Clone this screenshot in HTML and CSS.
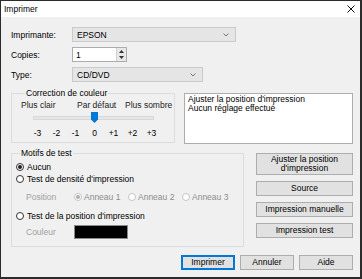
FILE: index.html
```html
<!DOCTYPE html>
<html lang="fr">
<head>
    <meta charset="UTF-8">
    <title>Imprimer</title>
    <link rel="stylesheet" href="styles.css">
</head>
<body>

    <div class="window">

        <!-- Title bar -->
        <div class="titlebar">
            <span class="title">Imprimer</span>
            <svg class="close" width="8" height="8" viewBox="0 0 8 8">
                <path d="M0.5 0.5 L7.5 7.5 M7.5 0.5 L0.5 7.5" stroke="#111" stroke-width="1"/>
            </svg>
        </div>

        <div class="content">

            <!-- Printer / copies / type -->
            <div class="field-row">
                <span class="field-label">Imprimante:</span>
                <div class="combo combo-printer">
                    <span>EPSON</span>
                    <svg width="6" height="4" viewBox="0 0 6 4"><path d="M0.5 0.5 L3 3 L5.5 0.5" fill="none" stroke="#777" stroke-width="1"/></svg>
                </div>
            </div>
            <div class="field-row">
                <span class="field-label">Copies:</span>
                <div class="spin">
                    <span class="spin-value">1</span>
                    <div class="spin-btns">
                        <div class="spin-btn"><svg width="5" height="3" viewBox="0 0 5 3"><path d="M0 3 L2.5 0 L5 3 Z" fill="#333"/></svg></div>
                        <div class="spin-btn"><svg width="5" height="3" viewBox="0 0 5 3"><path d="M0 0 L5 0 L2.5 3 Z" fill="#333"/></svg></div>
                    </div>
                </div>
            </div>
            <div class="field-row">
                <span class="field-label">Type:</span>
                <div class="combo combo-type">
                    <span>CD/DVD</span>
                    <svg width="6" height="4" viewBox="0 0 6 4"><path d="M0.5 0.5 L3 3 L5.5 0.5" fill="none" stroke="#777" stroke-width="1"/></svg>
                </div>
            </div>

            <!-- Colour correction + info -->
            <div class="section section-color">
                <fieldset class="group color-group">
                    <legend>Correction de couleur</legend>
                    <div class="scale-labels">
                        <span>Plus clair</span>
                        <span>Par défaut</span>
                        <span>Plus sombre</span>
                    </div>
                    <div class="slider">
                        <div class="track"></div>
                        <svg class="thumb" width="7" height="11" viewBox="0 0 7 11">
                            <path d="M0 0 H7 V7.5 L3.5 11 L0 7.5 Z" fill="#0078d7"/>
                        </svg>
                    </div>
                    <div class="ticks">
                        <span>-3</span><span>-2</span><span>-1</span><span>0</span><span>+1</span><span>+2</span><span>+3</span>
                    </div>
                </fieldset>
                <div class="info-box">
                    Ajuster la position d'impression<br>
                    Aucun réglage effectué
                </div>
            </div>

            <!-- Test patterns + side buttons -->
            <div class="section section-test">
                <fieldset class="group test-group">
                    <legend>Motifs de test</legend>
                    <div class="radio-row row-none">
                        <span class="radio checked"></span>
                        <span>Aucun</span>
                    </div>
                    <div class="radio-row row-density">
                        <span class="radio"></span>
                        <span>Test de densité d'impression</span>
                    </div>
                    <div class="sub-row row-position">
                        <span class="sub-label">Position</span>
                        <div class="sub-option"><span class="radio disabled checked"></span><span>Anneau 1</span></div>
                        <div class="sub-option"><span class="radio disabled"></span><span>Anneau 2</span></div>
                        <div class="sub-option"><span class="radio disabled"></span><span>Anneau 3</span></div>
                    </div>
                    <div class="radio-row row-offset">
                        <span class="radio"></span>
                        <span>Test de la position d'impression</span>
                    </div>
                    <div class="sub-row row-colour">
                        <span class="sub-label">Couleur</span>
                        <div class="swatch"></div>
                    </div>
                </fieldset>
                <div class="side-buttons">
                    <button class="btn btn-tall">Ajuster la position<br>d'impression</button>
                    <button class="btn">Source</button>
                    <button class="btn">Impression manuelle</button>
                    <button class="btn">Impression test</button>
                </div>
            </div>

            <!-- Dialog buttons -->
            <div class="footer">
                <button class="btn btn-default">Imprimer</button>
                <button class="btn">Annuler</button>
                <button class="btn">Aide</button>
            </div>

        </div>
    </div>

</body>
</html>
```

FILE: styles.css
```css
body {
    margin: 0;
    font-family: "Liberation Sans", Arial, sans-serif;
    font-size: 8.5px;
    line-height: 10px;
    color: #000;
    background-color: #f0f0f0;
}

/* Window frame */
.window {
    width: 362px;
    height: 279px;
    box-sizing: border-box;
    border: 1px solid #2b2b2b;
    border-right-width: 2px;
    border-bottom-width: 2px;
    background-color: #f0f0f0;
    display: flex;
    flex-direction: column;
}

.titlebar {
    height: 16px;
    background-color: #fff;
    display: flex;
    align-items: center;
    justify-content: space-between;
    padding: 0 5px 0 3px;
}

.content {
    flex: 1;
    padding: 10px 7px 0 10px;
    display: flex;
    flex-direction: column;
}

/* Top fields */
.field-row {
    display: flex;
    align-items: center;
    height: 15px;
    margin-bottom: 5px;
}

.field-label {
    width: 61px;
}

.combo {
    box-sizing: border-box;
    height: 15px;
    background-color: #e5e5e5;
    border: 1px solid #cacaca;
    display: flex;
    align-items: center;
    justify-content: space-between;
    padding: 0 6px 0 4px;
}

.combo-printer {
    width: 164px;
}

.combo-type {
    width: 131px;
}

.spin {
    box-sizing: border-box;
    width: 55px;
    height: 15px;
    background-color: #fff;
    border: 1px solid #adadad;
    display: flex;
    align-items: center;
    justify-content: space-between;
    padding-left: 3px;
}

.spin-btns {
    display: flex;
    flex-direction: column;
    height: 100%;
    width: 9px;
    border-left: 1px solid #d0d0d0;
}

.spin-btn {
    flex: 1;
    background-color: #e8e8e8;
    display: flex;
    align-items: center;
    justify-content: center;
}

/* Sections */
.section {
    display: flex;
    align-items: flex-start;
}

.section-color {
    margin-top: 1px;
}

.section-test {
    margin-top: 4px;
}

.group {
    margin: 0;
    padding: 0;
    border: 1px solid #dcdcdc;
    min-width: 0;
}

.group legend {
    margin-left: 4px;
    padding: 0 1px;
    line-height: 10px;
}

/* Colour correction */
.color-group {
    width: 164px;
    box-sizing: border-box;
    padding: 2px 0 4px 9px;
}

.scale-labels {
    display: grid;
    grid-template-columns: 56px 48px auto;
    white-space: nowrap;
    color: #222;
}

.slider {
    position: relative;
    height: 12px;
    margin: 1px 0 0 12px;
    width: 121px;
}

.track {
    position: relative;
    top: 5px;
    height: 2px;
    background-color: #e6e6e6;
    border: 1px solid #d8d8d8;
}

.thumb {
    position: absolute;
    left: 58px;
    top: 1px;
}

.ticks {
    display: grid;
    grid-template-columns: repeat(7, 19px);
    margin: 5px 0 0 7px;
    text-align: center;
}

.info-box {
    box-sizing: border-box;
    width: 169px;
    height: 51px;
    margin: 5px 0 0 9px;
    background-color: #fff;
    border: 1px solid #adadad;
    padding: 1px 3px;
    line-height: 9px;
}

/* Test patterns */
.test-group {
    width: 233px;
    box-sizing: border-box;
    padding: 4px 4px 7px 4px;
}

.radio-row {
    display: flex;
    align-items: center;
    gap: 3px;
    height: 10px;
}

.row-density {
    margin-top: 2px;
}

.row-offset {
    margin-top: 9px;
}

.radio {
    box-sizing: border-box;
    width: 8px;
    height: 8px;
    border: 1px solid #333;
    border-radius: 50%;
    background-color: #fff;
    display: flex;
    align-items: center;
    justify-content: center;
}

.radio.checked::after {
    content: "";
    width: 4px;
    height: 4px;
    border-radius: 50%;
    background-color: #222;
}

.radio.disabled {
    border-color: #c4c4c4;
}

.radio.disabled.checked::after {
    background-color: #b0b0b0;
}

.sub-row {
    display: flex;
    align-items: center;
    padding-left: 10px;
    color: #a0a0a0;
}

.row-position {
    height: 10px;
    margin-top: 8px;
}

.row-colour {
    height: 14px;
    margin-top: 4px;
}

.sub-label {
    width: 48px;
}

.sub-option {
    width: 54px;
    display: flex;
    align-items: center;
    gap: 2px;
    color: #8c8c8c;
}

.swatch {
    box-sizing: border-box;
    width: 54px;
    height: 14px;
    background-color: #000;
    border: 1px solid #8a8a8a;
}

/* Buttons */
.btn {
    box-sizing: border-box;
    height: 15px;
    margin: 0;
    padding: 0;
    font-family: inherit;
    font-size: 8.5px;
    line-height: 9px;
    color: #000;
    background-color: #e1e1e1;
    border: 1px solid #adadad;
    border-radius: 0;
}

.side-buttons {
    display: flex;
    flex-direction: column;
    gap: 6px;
    width: 97px;
    margin: 5px 0 0 12px;
}

.side-buttons .btn {
    width: 97px;
}

.side-buttons .btn-tall {
    height: 22px;
}

.footer {
    display: flex;
    justify-content: flex-end;
    gap: 5px;
    margin-top: 8px;
}

.footer .btn {
    width: 54px;
}

.btn-default {
    border: 2px solid #0078d7;
}
```
